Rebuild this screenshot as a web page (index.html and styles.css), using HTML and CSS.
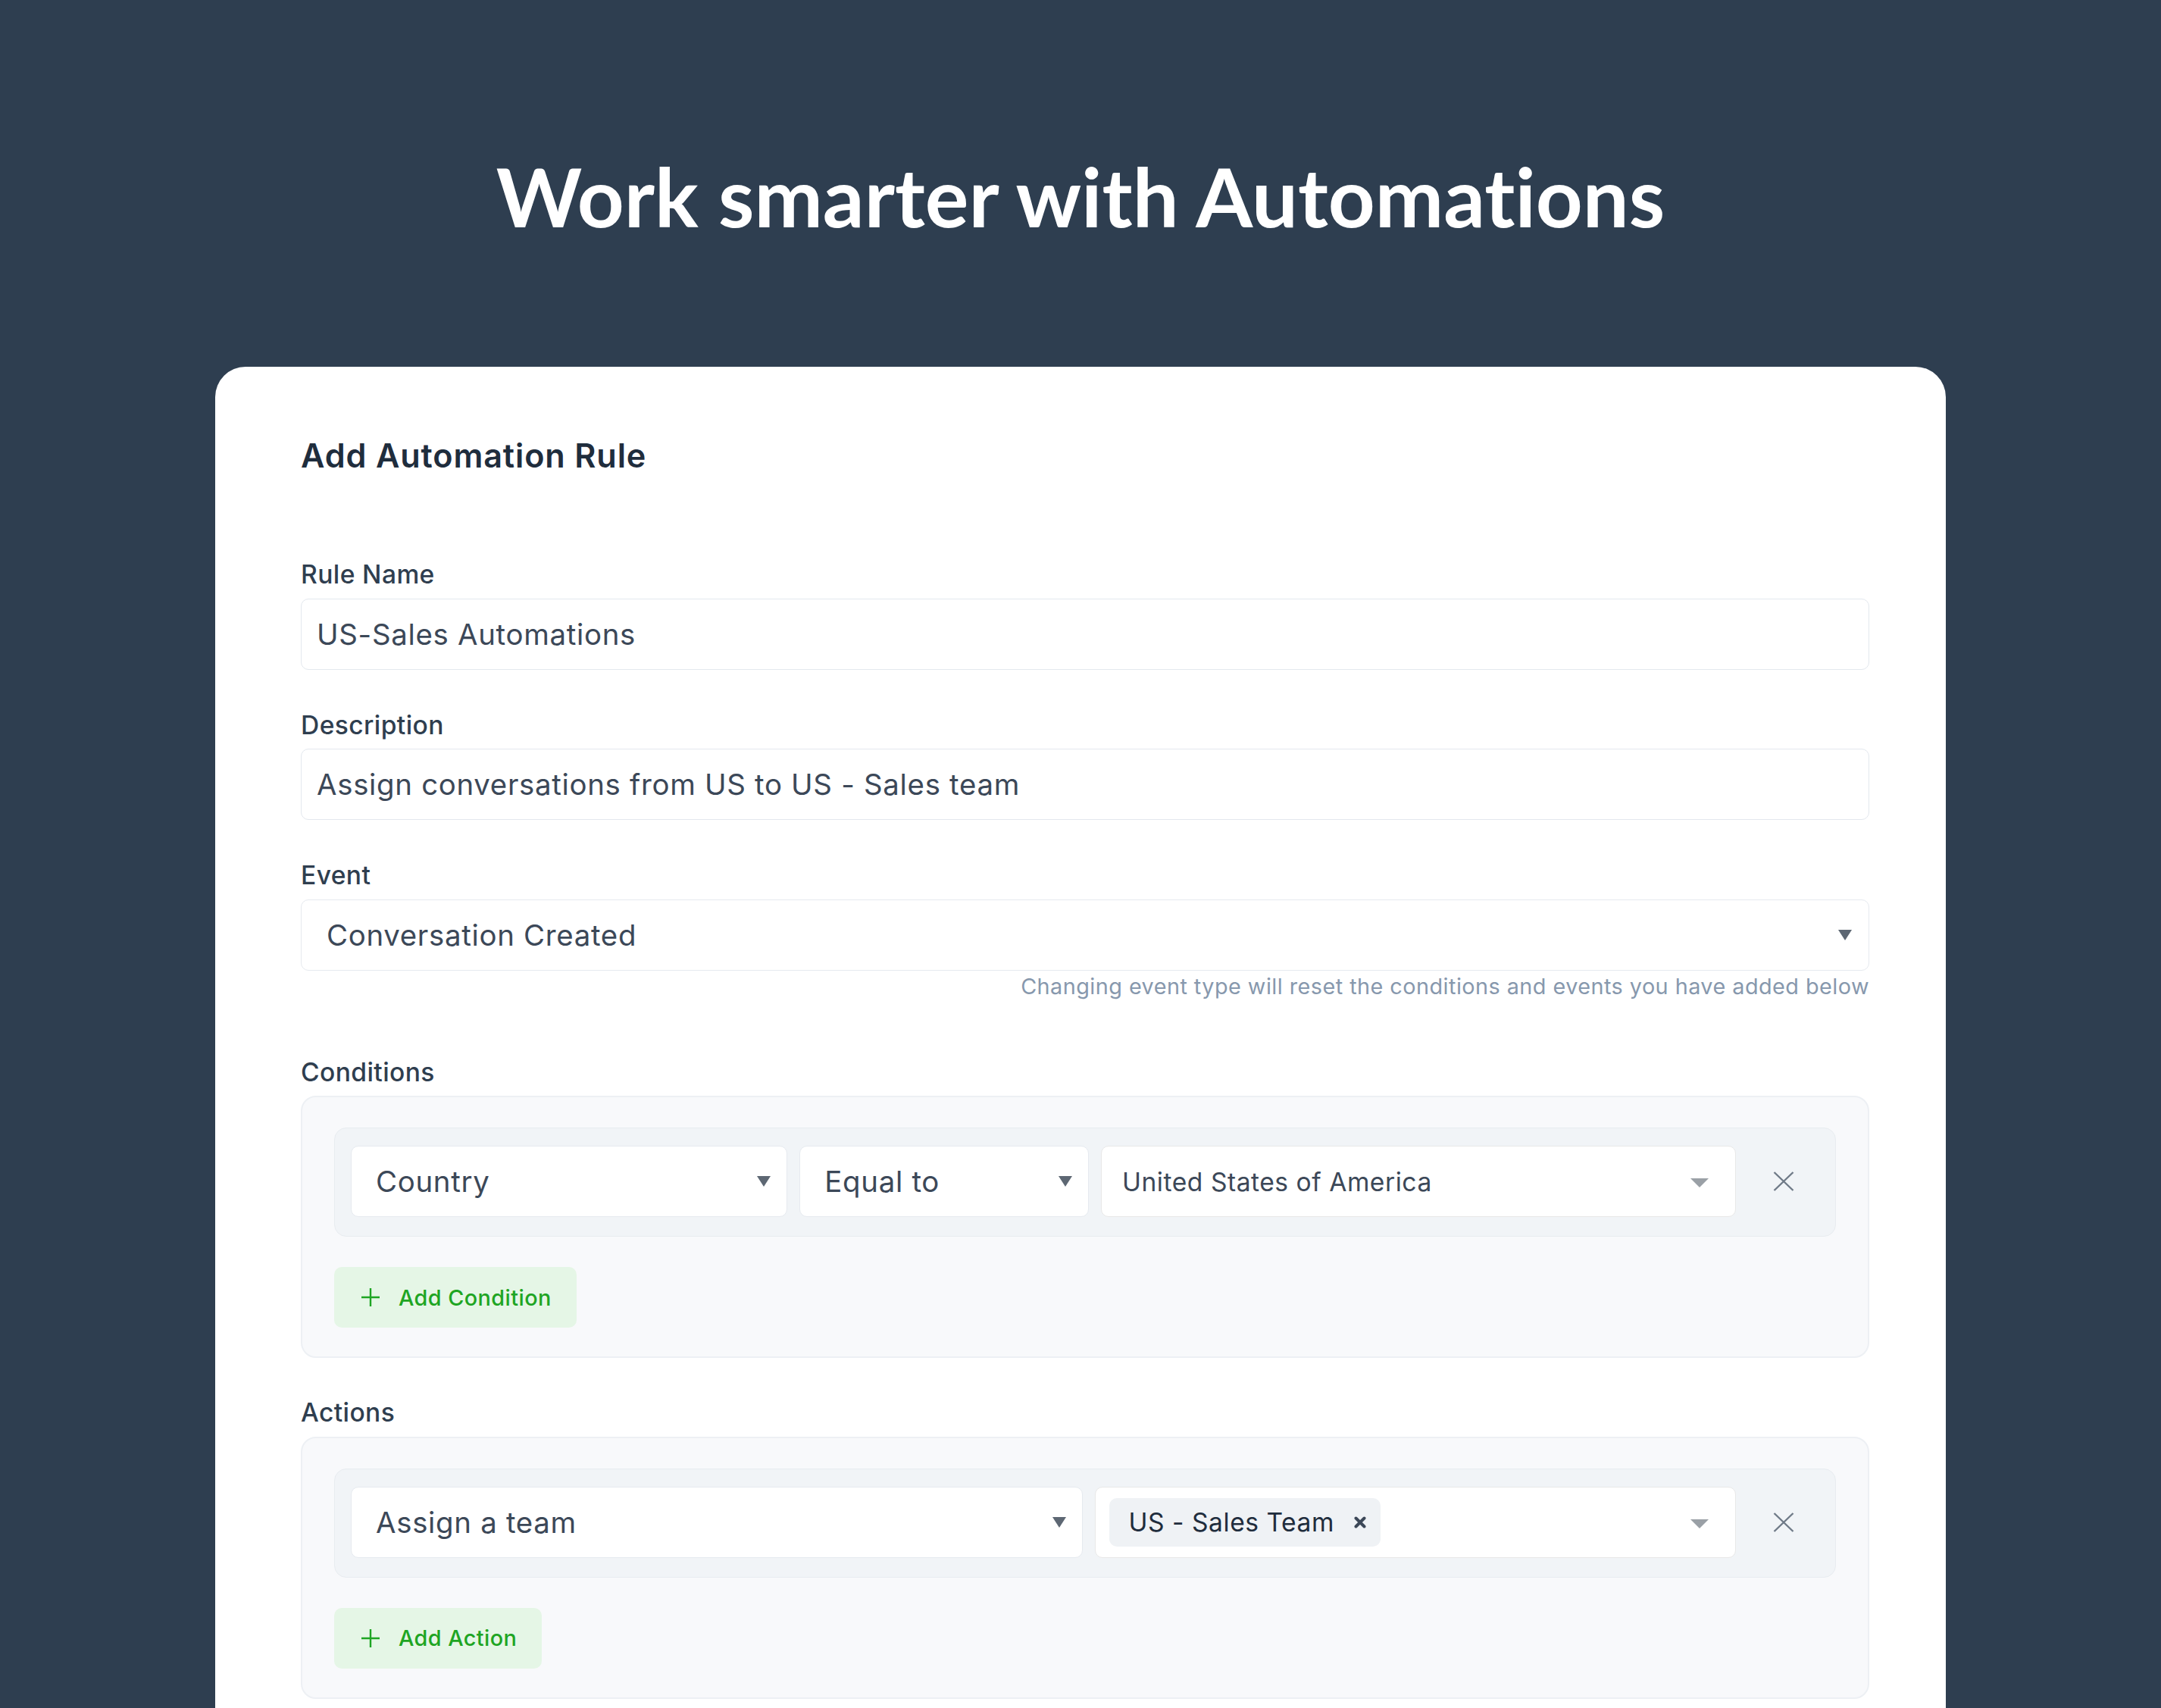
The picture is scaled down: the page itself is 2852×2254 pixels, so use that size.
FILE: index.html
```html
<!DOCTYPE html>
<html lang="en">
<head>
<meta charset="utf-8">
<title>Work smarter with Automations</title>
<link rel="stylesheet" href="styles.css">
</head>
<body>
<header class="hero">
  <h1 class="hero-title">Work smarter with Automations</h1>
</header>
<main class="card">
  <h2 class="card-title">Add Automation Rule</h2>

  <div class="field">
    <label class="label">Rule Name</label>
    <div class="input">US-Sales Automations</div>
  </div>

  <div class="field">
    <label class="label">Description</label>
    <div class="input">Assign conversations from US to US - Sales team</div>
  </div>

  <div class="field field--event">
    <label class="label">Event</label>
    <div class="select select--event">
      <span>Conversation Created</span>
      <svg class="caret" width="18" height="14" viewBox="0 0 18 14"><polygon points="0,0 18,0 9,14"/></svg>
    </div>
    <p class="help">Changing event type will reset the conditions and events you have added below</p>
  </div>

  <section class="section">
    <label class="label">Conditions</label>
    <div class="builder">
      <div class="rule-row rule-row--condition">
        <div class="select">
          <span>Country</span>
          <svg class="caret" width="18" height="14" viewBox="0 0 18 14"><polygon points="0,0 18,0 9,14"/></svg>
        </div>
        <div class="select">
          <span>Equal to</span>
          <svg class="caret" width="18" height="14" viewBox="0 0 18 14"><polygon points="0,0 18,0 9,14"/></svg>
        </div>
        <div class="mselect">
          <span class="mselect-value">United States of America</span>
          <svg class="mcaret" width="24" height="12" viewBox="0 0 24 12"><polygon points="0,0 24,0 12,12"/></svg>
        </div>
        <button class="remove" type="button" aria-label="Remove">
          <svg width="28" height="26" viewBox="0 0 28 26"><path d="M1.5 1 L26.5 25 M26.5 1 L1.5 25"/></svg>
        </button>
      </div>
      <button class="add-btn" type="button">
        <svg width="26" height="26" viewBox="0 0 26 26"><path d="M13 1 V25 M1 13 H25"/></svg>
        <span>Add Condition</span>
      </button>
    </div>
  </section>

  <section class="section">
    <label class="label">Actions</label>
    <div class="builder">
      <div class="rule-row rule-row--action">
        <div class="select">
          <span>Assign a team</span>
          <svg class="caret" width="18" height="14" viewBox="0 0 18 14"><polygon points="0,0 18,0 9,14"/></svg>
        </div>
        <div class="mselect mselect--tags">
          <span class="tag">US - Sales Team
            <svg class="tag-x" width="16" height="16" viewBox="0 0 16 16"><path d="M2.5 2.5 L13.5 13.5 M13.5 2.5 L2.5 13.5"/></svg>
          </span>
          <svg class="mcaret" width="24" height="12" viewBox="0 0 24 12"><polygon points="0,0 24,0 12,12"/></svg>
        </div>
        <button class="remove" type="button" aria-label="Remove">
          <svg width="28" height="26" viewBox="0 0 28 26"><path d="M1.5 1 L26.5 25 M26.5 1 L1.5 25"/></svg>
        </button>
      </div>
      <button class="add-btn" type="button">
        <svg width="26" height="26" viewBox="0 0 26 26"><path d="M13 1 V25 M1 13 H25"/></svg>
        <span>Add Action</span>
      </button>
    </div>
  </section>
</main>
</body>
</html>
```

FILE: styles.css
```css
html, body {
  margin: 0;
  padding: 0;
  background: #2e3e50;
}

body {
  font-family: Inter, "Noto Sans", sans-serif;
  min-height: 2254px;
  overflow: hidden;
}

.hero-title {
  margin: 0;
  padding-top: 204px;
  font-family: Lato, "Open Sans", sans-serif;
  font-weight: 700;
  font-size: 108px;
  line-height: 1;
  color: #ffffff;
  text-align: center;
  font-variant-ligatures: none;
  font-feature-settings: "liga" 0, "clig" 0;
}

.card {
  box-sizing: border-box;
  width: 2284px;
  margin: 172px auto 0;
  padding: 96px 101px 160px 113px;
  background: #ffffff;
  border-radius: 40px 40px 0 0;
}

.card-title {
  margin: 0 0 118px;
  font-weight: 600;
  font-size: 43.2px;
  line-height: 1;
  letter-spacing: 0.02em;
  color: #1f2d3d;
}

.field {
  margin-bottom: 56px;
}

.field--event {
  margin-bottom: 81px;
}

.label {
  display: block;
  margin-bottom: 15px;
  font-weight: 500;
  font-size: 33.6px;
  line-height: 1;
  letter-spacing: 0.012em;
  color: #2f3e4f;
}

.input {
  box-sizing: border-box;
  height: 94px;
  display: flex;
  align-items: center;
  padding: 0 20px;
  border: 1px solid #e3e8ee;
  border-radius: 10px;
  font-size: 38.4px;
  letter-spacing: 0.018em;
  color: #3c4858;
  white-space: nowrap;
}

.select {
  box-sizing: border-box;
  height: 94px;
  display: flex;
  align-items: center;
  justify-content: space-between;
  padding: 0 21px 0 32px;
  background: #ffffff;
  border: 1px solid #e6eaef;
  border-radius: 10px;
  font-size: 38.4px;
  letter-spacing: 0.018em;
  color: #3c4858;
  white-space: nowrap;
}

.select--event {
  padding-right: 22px;
  padding-left: 33px;
}

.caret {
  flex: none;
  fill: #5d6773;
}

.help {
  margin: 7px 0 0;
  text-align: right;
  font-size: 28.8px;
  line-height: 1;
  letter-spacing: 0.016em;
  color: #8798ad;
}

.section {
  margin-bottom: 55px;
}

.builder {
  display: flex;
  flex-direction: column;
  align-items: flex-start;
  gap: 40px;
  padding: 40px 42px 38px;
  background: #f8f9fb;
  border: 2px solid #edf0f4;
  border-radius: 20px;
}

.rule-row {
  align-self: stretch;
  display: grid;
  align-items: center;
  gap: 16px;
  padding: 23px 21px 25px;
  background: #f1f4f7;
  border: 1px solid #e8ecf0;
  border-radius: 16px;
}

.rule-row--condition {
  grid-template-columns: 577fr 382fr 839fr 94px;
}

.rule-row--action {
  grid-template-columns: 967fr 846fr 94px;
}

.mselect {
  box-sizing: border-box;
  height: 94px;
  display: flex;
  align-items: center;
  justify-content: space-between;
  padding: 0 35px 0 27px;
  background: #ffffff;
  border: 1px solid #e8e8e8;
  border-radius: 10px;
  font-size: 33.6px;
  letter-spacing: 0.016em;
  color: #3c4858;
  white-space: nowrap;
}

.mselect--tags {
  padding-left: 18px;
}

.mcaret {
  flex: none;
  fill: #9aa0a6;
  margin-top: 4px;
}

.tag {
  display: inline-flex;
  align-items: center;
  gap: 26px;
  height: 64px;
  padding: 0 19px 0 25px;
  background: #eff2f5;
  border-radius: 10px;
  color: #1f2d3d;
}

.tag-x {
  stroke: #3c4858;
  stroke-width: 4;
  stroke-linecap: round;
  fill: none;
}

.remove {
  height: 94px;
  display: flex;
  align-items: center;
  justify-content: center;
  padding: 0;
  background: none;
  border: none;
}

.remove svg {
  stroke: #6f7a87;
  stroke-width: 2.4;
  fill: none;
}

.add-btn {
  display: inline-flex;
  align-items: center;
  gap: 24px;
  height: 80px;
  padding: 0 33px 0 35px;
  background: #e5f6e6;
  border: none;
  border-radius: 10px;
  font-family: Inter, "Noto Sans", sans-serif;
  font-weight: 500;
  font-size: 28.8px;
  letter-spacing: 0.015em;
  color: #1ea523;
}

.add-btn svg {
  flex: none;
  stroke: #1ea523;
  stroke-width: 2.4;
  fill: none;
}
```
